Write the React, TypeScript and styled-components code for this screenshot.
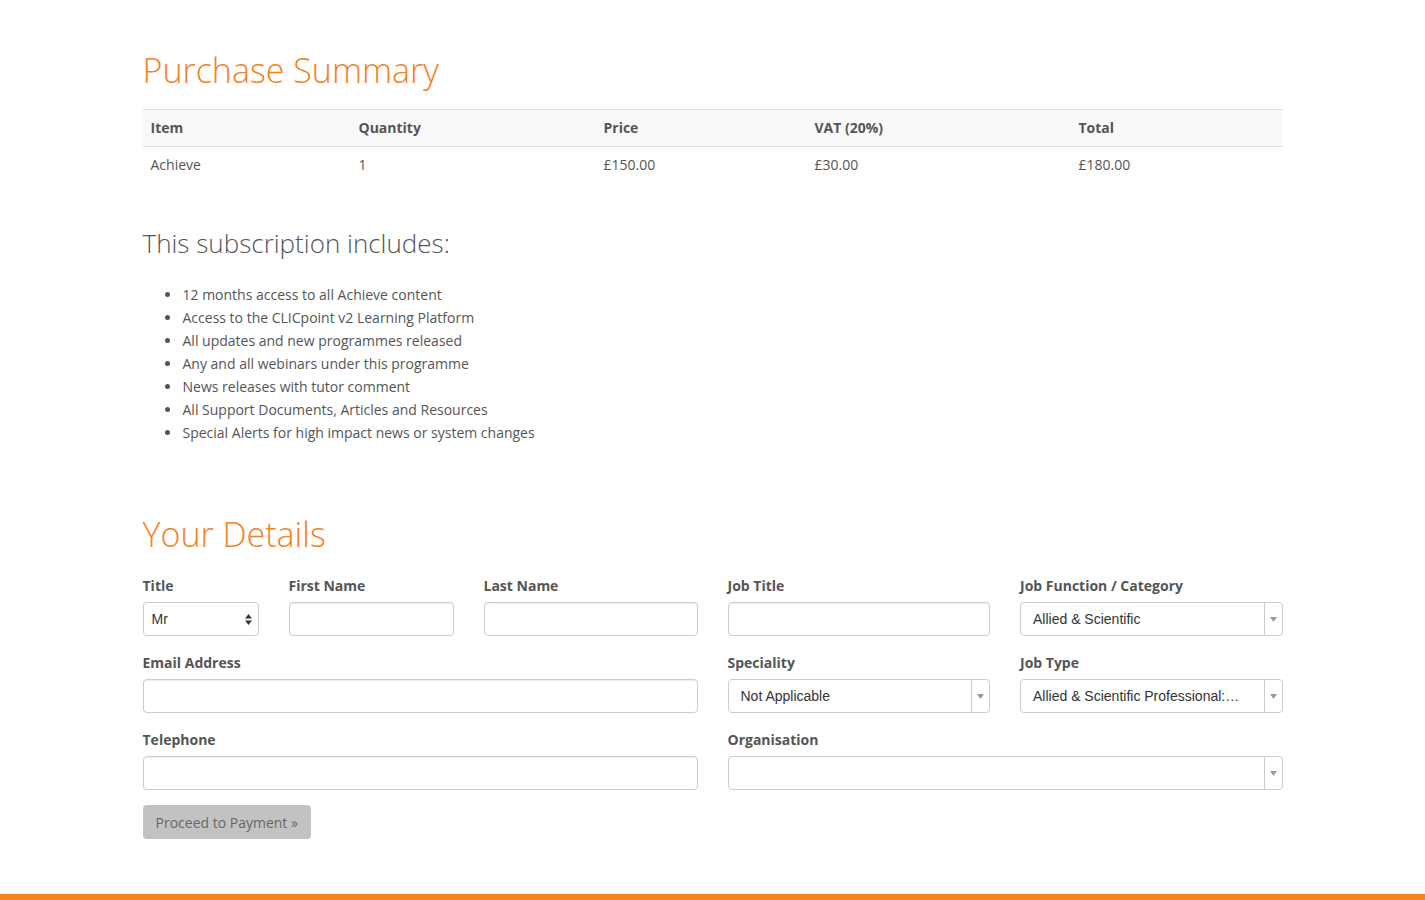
import React from "react";
import styled, { createGlobalStyle } from "styled-components";

const Global = createGlobalStyle`
  html, body { margin: 0; padding: 0; background: #fff; }
  body { font-family: "Open Sans", "Liberation Sans", sans-serif; font-size: 14px; color: #555; }
  * { box-sizing: border-box; }
`;

const ORANGE = "#f5821f";

const Page = styled.div`
  height: 900px;
  overflow: hidden;
  display: flex;
  flex-direction: column;
`;

const Container = styled.main`
  width: 1140px;
  margin: 0 auto;
  padding-top: 50px;
`;

const PageTitle = styled.h1<{ $mt?: number }>`
  margin: ${(p) => p.$mt ?? 0}px 0 0;
  font-weight: 300;
  font-size: 34px;
  line-height: 40px;
  color: ${ORANGE};
`;

const Table = styled.table`
  width: 100%;
  border-collapse: collapse;
  margin-top: 19px;
  th, td {
    text-align: left;
    padding: 8px 8px;
    line-height: 20px;
    font-size: 14px;
    color: #555;
  }
  th { font-weight: 700; }
  thead tr { background: #f9f9f9; border-top: 1px solid #ddd; border-bottom: 1px solid #ddd; }
`;

const SubHeading = styled.h3`
  margin: 45px 0 0;
  font-weight: 300;
  font-size: 26px;
  line-height: 30px;
  color: #555;
`;

const List = styled.ul`
  margin: 25px 0 0;
  padding-left: 39px;
  li { font-size: 14px; line-height: 23px; color: #555; padding-left: 1px; }
`;

const FormGrid = styled.div`
  margin-top: 21px;
  display: grid;
  grid-template-columns: 1fr 1fr;
  column-gap: 30px;
`;

const Row = styled.div<{ $cols: string }>`
  display: grid;
  grid-template-columns: ${(p) => p.$cols};
  column-gap: 30px;
`;

const Group = styled.div`
  display: flex;
  flex-direction: column;
  margin-bottom: 16px;
`;

const Label = styled.label`
  font-weight: 700;
  font-size: 14px;
  line-height: 22px;
  margin-bottom: 5px;
  color: #555;
`;

const Input = styled.input`
  height: 34px;
  width: 100%;
  border: 1px solid #ccc;
  border-radius: 4px;
  box-shadow: inset 0 1px 1px rgba(0, 0, 0, 0.075);
  padding: 6px 12px;
  font-family: "Liberation Sans", Arial, sans-serif;
  font-size: 14px;
  color: #333;
  outline: none;
`;

const NativeSelect = styled.div`
  height: 34px;
  border: 1px solid #ccc;
  border-radius: 4px;
  display: flex;
  align-items: center;
  justify-content: space-between;
  padding: 0 6px 0 8px;
  font-family: "Liberation Sans", Arial, sans-serif;
  font-size: 14px;
  color: #333;
`;

const Chosen = styled.div`
  height: 34px;
  border: 1px solid #ccc;
  border-radius: 4px;
  display: flex;
  align-items: stretch;
  background: #fff;
  font-family: "Liberation Sans", Arial, sans-serif;
  font-size: 14px;
  color: #333;
`;

const ChosenText = styled.span`
  flex: 1;
  display: flex;
  align-items: center;
  padding-left: 12px;
  white-space: nowrap;
  overflow: hidden;
`;

const ChosenArrow = styled.span`
  width: 18px;
  border-left: 1px solid #ccc;
  display: flex;
  align-items: center;
  justify-content: center;
`;

const Button = styled.button`
  align-self: flex-start;
  height: 34px;
  padding: 0 13px;
  border: none;
  border-radius: 4px;
  background: #c2c2c2;
  color: #666;
  font-family: "Open Sans", sans-serif;
  font-size: 14px;
  margin-top: -1px;
`;

const Footer = styled.footer`
  margin-top: 55px;
  border-top: 6px solid ${ORANGE};
  flex: 1;
`;

const Arrow = () => (
  <svg width="7" height="5" viewBox="0 0 7 5">
    <path d="M0 0 L7 0 L3.5 5 Z" fill="#999" />
  </svg>
);

const UpDown = () => (
  <svg width="7" height="11" viewBox="0 0 7 11">
    <path d="M0 4.5 L7 4.5 L3.5 0 Z" fill="#333" />
    <path d="M0 6.5 L7 6.5 L3.5 11 Z" fill="#333" />
  </svg>
);

const ChosenSelect = ({ value }: { value?: string }) => (
  <Chosen>
    <ChosenText>{value}</ChosenText>
    <ChosenArrow>
      <Arrow />
    </ChosenArrow>
  </Chosen>
);

const Field = ({ label, children }: { label: string; children: React.ReactNode }) => (
  <Group>
    <Label>{label}</Label>
    {children}
  </Group>
);

const items = [
  "12 months access to all Achieve content",
  "Access to the CLICpoint v2 Learning Platform",
  "All updates and new programmes released",
  "Any and all webinars under this programme",
  "News releases with tutor comment",
  "All Support Documents, Articles and Resources",
  "Special Alerts for high impact news or system changes",
];

export default function App() {
  return (
    <Page>
      <Global />
      <Container>
        <PageTitle>Purchase Summary</PageTitle>
        <Table>
          <colgroup>
            <col style={{ width: 208 }} />
            <col style={{ width: 245 }} />
            <col style={{ width: 211 }} />
            <col style={{ width: 264 }} />
            <col style={{ width: 212 }} />
          </colgroup>
          <thead>
            <tr>
              <th>Item</th>
              <th>Quantity</th>
              <th>Price</th>
              <th>VAT (20%)</th>
              <th>Total</th>
            </tr>
          </thead>
          <tbody>
            <tr>
              <td>Achieve</td>
              <td>1</td>
              <td>£150.00</td>
              <td>£30.00</td>
              <td>£180.00</td>
            </tr>
          </tbody>
        </Table>

        <SubHeading>This subscription includes:</SubHeading>
        <List>
          {items.map((t) => (
            <li key={t}>{t}</li>
          ))}
        </List>

        <PageTitle $mt={70}>Your Details</PageTitle>
        <FormGrid>
          <div>
            <Row $cols="116px 165px 1fr">
              <Field label="Title">
                <NativeSelect>
                  <span>Mr</span>
                  <UpDown />
                </NativeSelect>
              </Field>
              <Field label="First Name">
                <Input />
              </Field>
              <Field label="Last Name">
                <Input />
              </Field>
            </Row>
            <Field label="Email Address">
              <Input />
            </Field>
            <Field label="Telephone">
              <Input />
            </Field>
          </div>
          <div>
            <Row $cols="1fr 1fr">
              <Field label="Job Title">
                <Input />
              </Field>
              <Field label="Job Function / Category">
                <ChosenSelect value="Allied & Scientific" />
              </Field>
            </Row>
            <Row $cols="1fr 1fr">
              <Field label="Speciality">
                <ChosenSelect value="Not Applicable" />
              </Field>
              <Field label="Job Type">
                <ChosenSelect value="Allied & Scientific Professional:…" />
              </Field>
            </Row>
            <Field label="Organisation">
              <ChosenSelect />
            </Field>
          </div>
        </FormGrid>
        <Button>Proceed to Payment »</Button>
      </Container>
      <Footer />
    </Page>
  );
}
